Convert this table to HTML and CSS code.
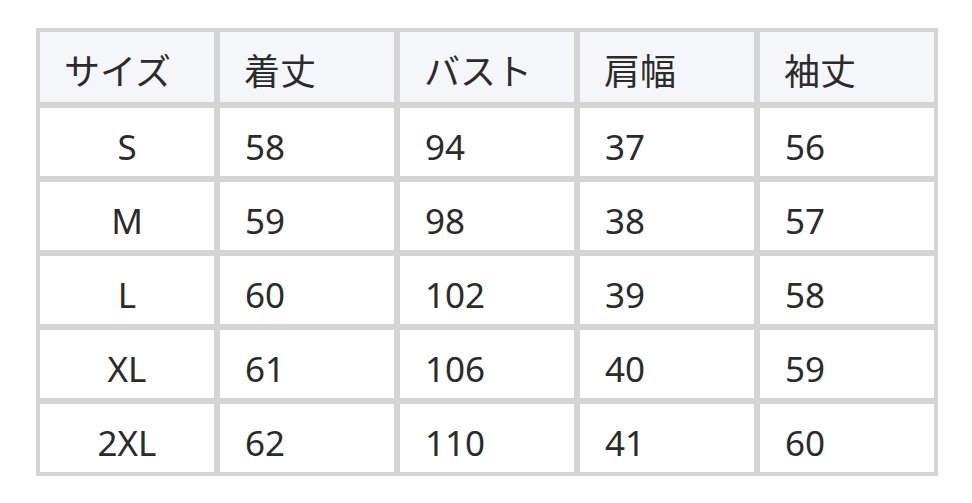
FILE: index.html
```html
<!DOCTYPE html>
<html lang="ja">
<head>
<meta charset="utf-8">
<title>サイズ表</title>
<link rel="stylesheet" href="styles.css">
</head>
<body>
<div class="size-table">
  <div class="cell head">サイズ</div>
  <div class="cell head">着丈</div>
  <div class="cell head">バスト</div>
  <div class="cell head">肩幅</div>
  <div class="cell head">袖丈</div>

  <div class="cell size">S</div>
  <div class="cell">58</div>
  <div class="cell">94</div>
  <div class="cell">37</div>
  <div class="cell">56</div>

  <div class="cell size">M</div>
  <div class="cell">59</div>
  <div class="cell">98</div>
  <div class="cell">38</div>
  <div class="cell">57</div>

  <div class="cell size">L</div>
  <div class="cell">60</div>
  <div class="cell">102</div>
  <div class="cell">39</div>
  <div class="cell">58</div>

  <div class="cell size">XL</div>
  <div class="cell">61</div>
  <div class="cell">106</div>
  <div class="cell">40</div>
  <div class="cell">59</div>

  <div class="cell size">2XL</div>
  <div class="cell">62</div>
  <div class="cell">110</div>
  <div class="cell">41</div>
  <div class="cell">60</div>
</div>
</body>
</html>
```

FILE: styles.css
```css
html, body {
  margin: 0;
  padding: 0;
  background: #ffffff;
}

body {
  padding: 28px 0 0 36px;
  font-family: "Noto Sans", "Noto Sans CJK JP", sans-serif;
  color: #2b2b2b;
}

.size-table {
  display: grid;
  grid-template-columns: repeat(5, 174px);
  grid-template-rows: 70px repeat(5, 68px);
  gap: 6px;
  padding: 4px;
  width: max-content;
  background: #d4d4d4;
}

.cell {
  background: #ffffff;
  font-size: 35px;
  line-height: 36px;
  padding: 21px 0 0 25px;
  box-sizing: border-box;
}

.cell.head {
  background: #f5f6fa;
  font-size: 36px;
  padding-top: 22px;
  padding-left: 24px;
}

.cell.size {
  text-align: center;
  padding-left: 0;
}
```
